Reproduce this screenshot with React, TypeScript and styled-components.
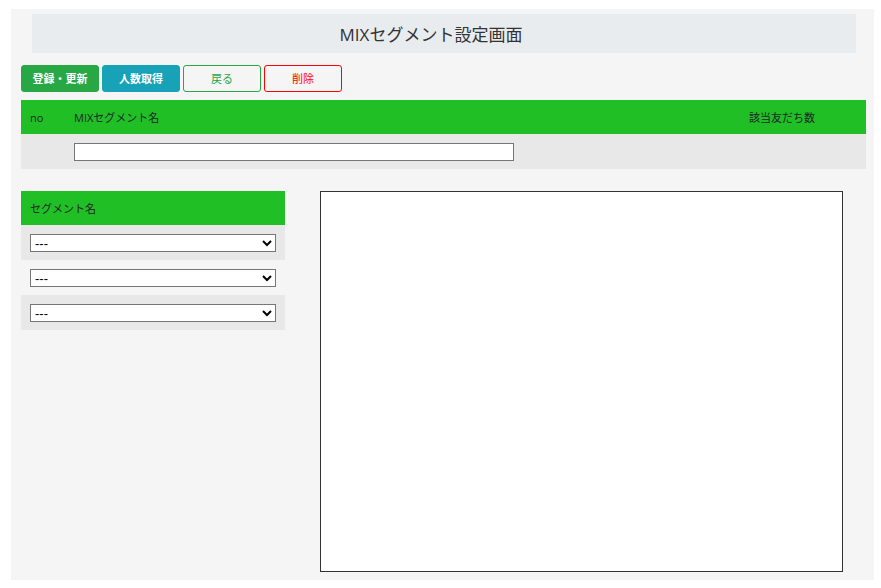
import React, { useState } from 'react';
import styled, { createGlobalStyle } from 'styled-components';

const SEGMENT_ROWS = [0, 1, 2];

export default function App() {

    const [name, setName] = useState('');
    const [segments, setSegments] = useState(['', '', '']);

    const changeSegment = (index: number, value: string) => {
        setSegments(segments.map((segment, i) => (i === index ? value : segment)));
    };

    return (
        <>
            <GlobalStyle />
            <Page>
                <Title>MIXセグメント設定画面</Title>

                <Toolbar>
                    <Button $text="#fff" $line="#28a745" $fill="#28a745" $bold>登録・更新</Button>
                    <Button $text="#fff" $line="#17a2b8" $fill="#17a2b8" $bold>人数取得</Button>
                    <Button $text="#28a745" $line="#28a745">戻る</Button>
                    <Button $text="#ff0000" $line="#ff0000">削除</Button>
                </Toolbar>

                <Table>
                    <colgroup>
                        <NoCol />
                        <NameCol />
                        <CountCol />
                    </colgroup>
                    <thead>
                        <tr>
                            <HeadCell>no</HeadCell>
                            <HeadCell>MIXセグメント名</HeadCell>
                            <HeadCell>該当友だち数</HeadCell>
                        </tr>
                    </thead>
                    <tbody>
                        <Row>
                            <Cell />
                            <Cell>
                                <NameInput type="text" aria-label="MIXセグメント名" value={name} onChange={e => setName(e.target.value)} />
                            </Cell>
                            <Cell />
                        </Row>
                    </tbody>
                </Table>

                <Columns>
                    <Table>
                        <thead>
                            <tr>
                                <HeadCell>セグメント名</HeadCell>
                            </tr>
                        </thead>
                        <tbody>
                            {
                                SEGMENT_ROWS.map(index => (
                                    <Row key={index}>
                                        <Cell>
                                            <Select aria-label="セグメント名" value={segments[index]} onChange={e => changeSegment(index, e.target.value)}>
                                                <option value="">---</option>
                                            </Select>
                                        </Cell>
                                    </Row>
                                ))
                            }
                        </tbody>
                    </Table>
                    <Canvas />
                </Columns>
            </Page>
        </>
    );
}

const GlobalStyle = createGlobalStyle`
* {
    box-sizing: border-box;
}

body {
    margin: 0;
    background: #fff;
    color: #212529;
    font-family: "Open Sans", "Noto Sans CJK JP", sans-serif;
    font-size: 11px;
    line-height: 17px;
}
`;

const Page = styled.main`
    margin: 9px 7px 8px 11px;
    padding: 5px 8px 8px 10px;
    background: #f5f5f5;
`;

const Title = styled.h1`
    margin: 0 10px 12px 11px;
    padding: 9px 26px 6px 0;
    background: #e8ecef;
    color: #333;
    font-size: 17px;
    font-weight: 400;
    line-height: 24px;
    text-align: center;
`;

const Toolbar = styled.div`
    display: flex;
    gap: 3px;
    margin-bottom: 8px;
`;

const Button = styled.button<{ $text: string; $line: string; $fill?: string; $bold?: boolean }>`
    width: 78px;
    height: 27px;
    padding: 0;
    border: 1px solid ${props => props.$line};
    border-radius: 3px;
    background: ${props => props.$fill || 'transparent'};
    color: ${props => props.$text};
    font-family: inherit;
    font-size: 11px;
    font-weight: ${props => (props.$bold ? 700 : 400)};
    line-height: 17px;
    cursor: pointer;
`;

const Table = styled.table`
    width: 100%;
    table-layout: fixed;
    border-collapse: collapse;
`;

const NoCol = styled.col`
    width: 44px;
`;

const NameCol = styled.col`
    width: auto;
`;

const CountCol = styled.col`
    width: 126px;
`;

const HeadCell = styled.th`
    height: 34px;
    padding: 0 9px;
    background: #20bf26;
    font-weight: 400;
    text-align: left;
`;

const Row = styled.tr`
    &:nth-child(odd) {
        background: #e8e8e8;
    }
`;

const Cell = styled.td`
    height: 35px;
    padding: 0 9px;
    vertical-align: middle;
`;

const NameInput = styled.input`
    display: block;
    width: 67%;
    height: 18px;
    padding: 0 2px;
    border: 1px solid #767676;
    background: #fff;
    font-family: inherit;
    font-size: 11px;
`;

const Select = styled.select`
    display: block;
    width: 100%;
    height: 18px;
    padding: 0;
    border: 1px solid #767676;
    border-radius: 0;
    background: #fff;
    color: #000;
    font-family: "Liberation Sans", "Noto Sans CJK JP", sans-serif;
    font-size: 13px;
`;

const Columns = styled.div`
    display: grid;
    grid-template-columns: 264fr 523fr;
    align-items: start;
    gap: 35px;
    margin: 22px 23px 0 0;
`;

const Canvas = styled.section`
    height: 381px;
    border: 1px solid #333;
    background: #fff;
`;
